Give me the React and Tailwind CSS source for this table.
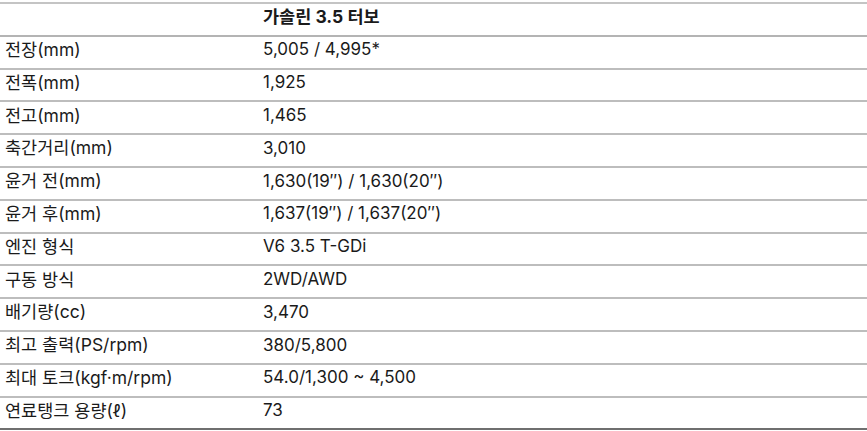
export default function App() {
	let specs = [
		["전장(mm)", "5,005 / 4,995*"],
		["전폭(mm)", "1,925"],
		["전고(mm)", "1,465"],
		["축간거리(mm)", "3,010"],
		["윤거 전(mm)", "1,630(19″) / 1,630(20″)"],
		["윤거 후(mm)", "1,637(19″) / 1,637(20″)"],
		["엔진 형식", "V6 3.5 T-GDi"],
		["구동 방식", "2WD/AWD"],
		["배기량(cc)", "3,470"],
		["최고 출력(PS/rpm)", "380/5,800"],
		["최대 토크(kgf·m/rpm)", "54.0/1,300 ~ 4,500"],
		["연료탱크 용량(ℓ)", "73"],
	]

	return <div className='w-[867px] h-[431px] bg-white pt-[2px] text-[#1a1a1a] overflow-hidden' style={{ fontFamily: 'Inter, "Noto Sans CJK KR", sans-serif' }}>
		<div className='border-t-2 border-[#c4c4c4]'>
			<div className='flex items-center h-[32.8px] pb-[4px] border-b-2 border-[#b4b4b4]'>
				<div className='w-[263px] pl-[5px]'></div>
				<div className='font-bold text-[17.5px]'>가솔린 3.5 터보</div>
			</div>
			{specs.map((row, index) =>
				<div key={index} className={'flex items-center h-[32.8px] pb-[4px] border-b-2 ' + (index == specs.length - 1 ? 'border-[#6f6f6f]' : 'border-[#bdbdbd]')}>
					<div className='w-[263px] pl-[5px] text-[17.5px]'>{row[0]}</div>
					<div className='text-[17px]'>{row[1]}</div>
				</div>
			)}
		</div>
	</div>
}
